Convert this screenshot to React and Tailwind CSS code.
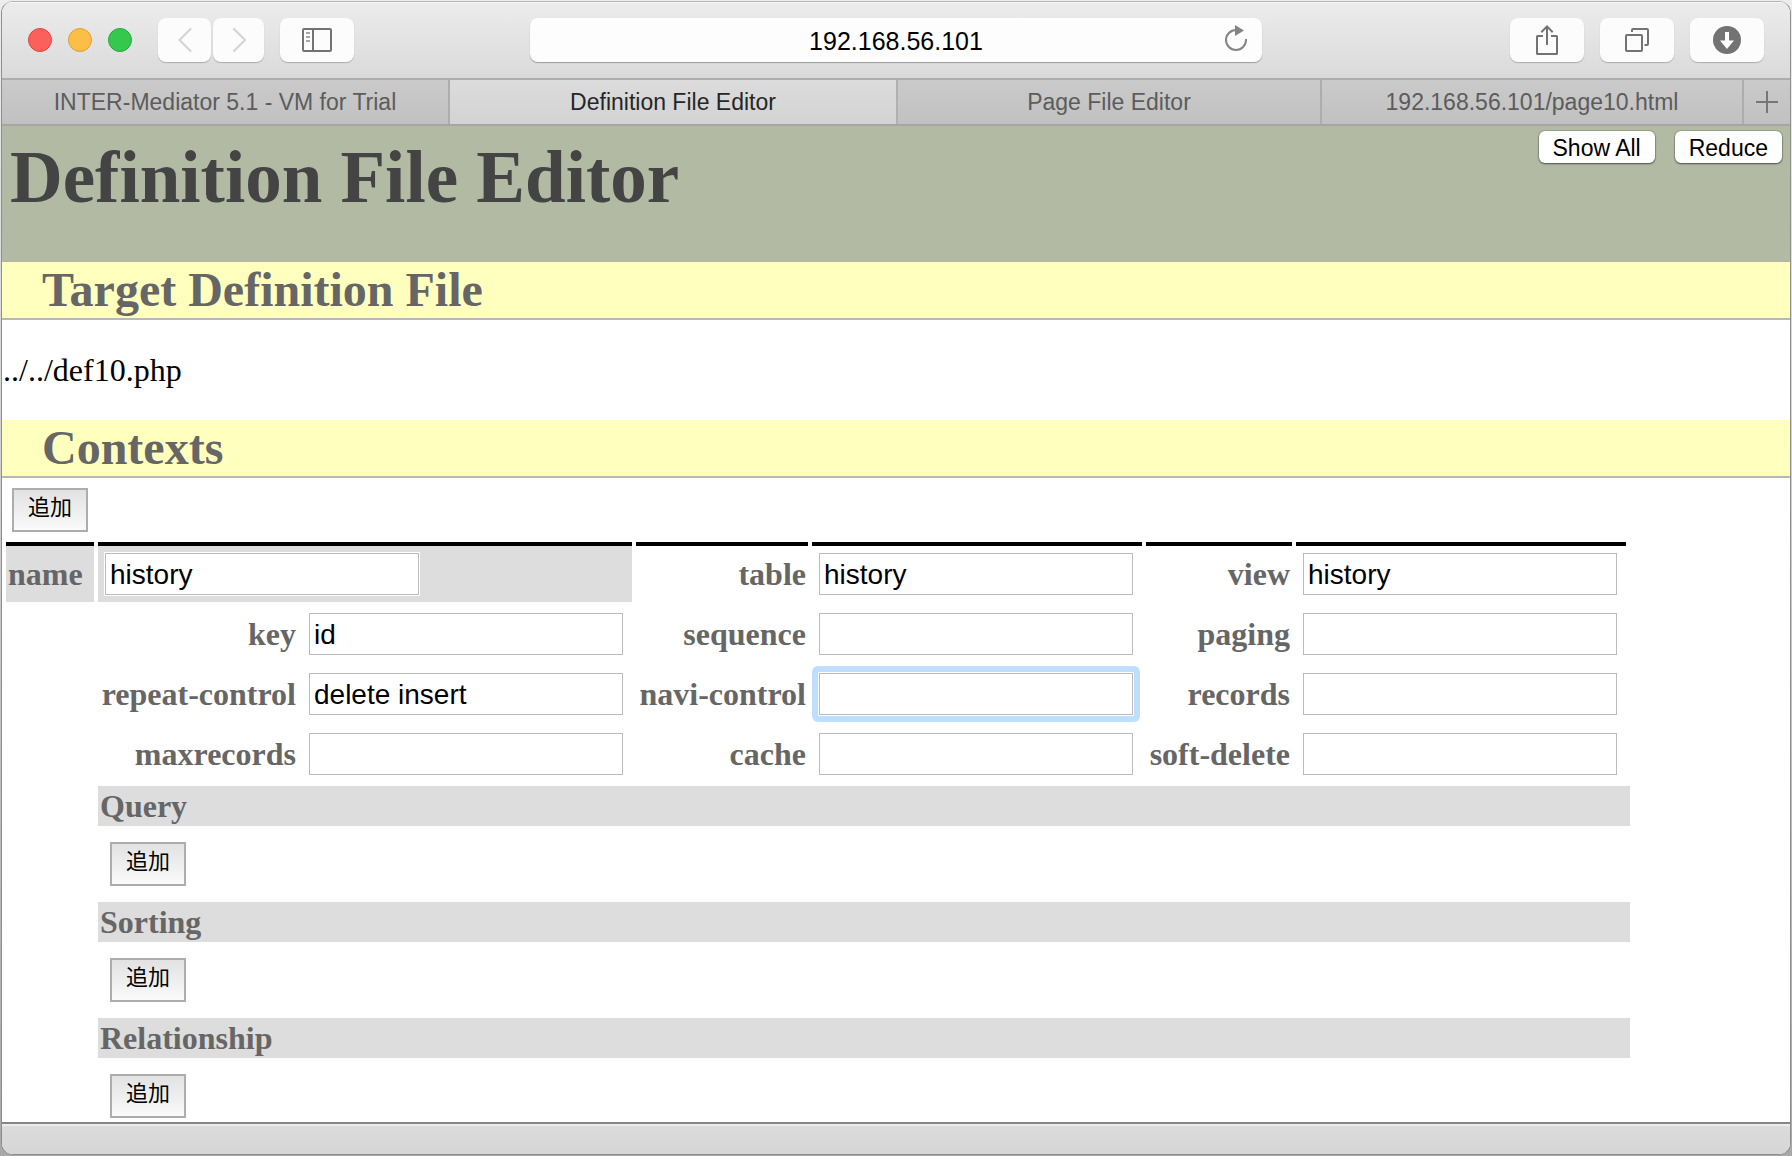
import React from "react";

const serif = "font-['Liberation_Serif','Noto_Sans_CJK_JP',serif]";
const sans = "font-['Liberation_Sans','Noto_Sans_CJK_JP',sans-serif]";

function ToolButton({ label, className = "w-[74px]", children }) {
  return (
    <button
      type="button"
      aria-label={label}
      className={`flex h-11 items-center justify-center rounded-lg bg-[#fcfcfc] shadow-[0_1px_1px_rgba(0,0,0,0.22)] ${className}`}
    >
      {children}
    </button>
  );
}

function Toolbar() {
  return (
    <header className="grid h-[78px] grid-cols-[528fr_732fr_528fr] items-center border-b-2 border-[#adadad] bg-linear-to-b from-[#ececec] to-[#dadada] shadow-[inset_0_1px_0_#f7f7f7]">
      <div className="flex items-center pl-[26px]">
        <div className="flex gap-4">
          <button type="button" aria-label="Close" className="size-6 rounded-full border border-[#e0443f] bg-[#fc605c]" />
          <button type="button" aria-label="Minimize" className="size-6 rounded-full border border-[#dea035] bg-[#fdbe46]" />
          <button type="button" aria-label="Zoom" className="size-6 rounded-full border border-[#24a93a] bg-[#34c84f]" />
        </div>
        <div className="ml-[26px] flex gap-0.5">
          <ToolButton label="Back" className="w-[53px]">
            <svg width="16" height="26" viewBox="1 0 16 26" fill="none" stroke="#d6d6d6" strokeWidth="2.4" strokeLinecap="round" strokeLinejoin="round">
              <path d="M14.500 2 3.500 13l11 11" />
            </svg>
          </ToolButton>
          <ToolButton label="Forward" className="w-[51px]">
            <svg width="16" height="26" viewBox="0 0 16 26" fill="none" stroke="#d6d6d6" strokeWidth="2.4" strokeLinecap="round" strokeLinejoin="round">
              <path d="M3 2l11 11L3 24" />
            </svg>
          </ToolButton>
        </div>
        <div className="ml-4">
          <ToolButton label="Sidebar">
            <svg width="30" height="24" viewBox="0 0 30 24" fill="none" stroke="#737373" strokeWidth="2">
              <rect x="1" y="1" width="28" height="22" rx="1" />
              <path d="M11 1v22" />
              <path d="M4 5h4M4 9h4M4 13h4" stroke="#a6a6a6" />
            </svg>
          </ToolButton>
        </div>
      </div>
      <div className="flex h-11 items-center rounded-lg bg-[#fdfdfd] pr-3.5 pl-[38px] shadow-[0_1px_1px_rgba(0,0,0,0.3)]">
        <input
          aria-label="Address"
          defaultValue="192.168.56.101"
          className="min-w-0 flex-1 bg-transparent pt-0.5 text-center text-[25px] leading-8 text-black outline-none"
        />
        <button type="button" aria-label="Reload">
          <svg width="24" height="30" viewBox="0 -1 24 30" fill="none">
            <path d="M12 4A10 10 0 1 0 22 14V13" stroke="#838383" strokeWidth="2" />
            <path d="M11 -1l9 5.500-9 5.500z" fill="#838383" />
          </svg>
        </button>
      </div>
      <div className="flex justify-end gap-4 pr-[26px]">
        <ToolButton label="Share">
          <svg width="24" height="32" viewBox="0 0 24 32" fill="none" stroke="#737373" strokeWidth="2">
            <path d="M8 12H2.500a.5.5 0 0 0-.5.5v17a.5.5 0 0 0 .5.5h19a.5.5 0 0 0 .5-.5v-17a.5.5 0 0 0-.5-.5H16" />
            <path d="M12 21V2M6.300 8.200 12 2.400l5.700 5.800" />
          </svg>
        </ToolButton>
        <ToolButton label="Show all tabs">
          <svg width="26" height="26" viewBox="0 0 26 26" fill="none" stroke="#737373" strokeWidth="2">
            <rect x="2" y="8" width="16" height="16" rx="1" />
            <path d="M8 5V3a1 1 0 0 1 1-1h14a1 1 0 0 1 1 1v14a1 1 0 0 1-1 1h-2.500" />
          </svg>
        </ToolButton>
        <ToolButton label="Downloads">
          <svg width="28" height="28" viewBox="0 0 28 28">
            <circle cx="14" cy="14" r="14" fill="#737373" />
            <path d="M12 6h4v8.500h5L14 23l-7-8.500h5z" fill="#fff" />
          </svg>
        </ToolButton>
      </div>
    </header>
  );
}

const tabs = [
  { title: "INTER-Mediator 5.1 - VM for Trial" },
  { title: "Definition File Editor", active: true },
  { title: "Page File Editor" },
  { title: "192.168.56.101/page10.html" },
];

function TabBar() {
  return (
    <nav className="grid h-[46px] grid-cols-[448fr_448fr_424fr_422fr_46px] border-b-2 border-[#a5a7a6] text-[23px]">
      {tabs.map((t) => (
        <button
          key={t.title}
          type="button"
          className={
            t.active
              ? "border-r-2 border-[#b0b0b0] bg-linear-to-b from-[#dcdcdc] to-[#d3d3d3] leading-8 whitespace-nowrap text-[#262626]"
              : "border-r-2 border-[#adadad] bg-linear-to-b from-[#cacaca] to-[#c1c1c1] leading-8 whitespace-nowrap text-[#5c5c5c]"
          }
        >
          {t.title}
        </button>
      ))}
      <button type="button" aria-label="New tab" className="flex items-center justify-center bg-linear-to-b from-[#cacaca] to-[#c1c1c1]">
        <svg width="22" height="22" viewBox="0 0 22 22" stroke="#767676" strokeWidth="2">
          <path d="M11 0v22M0 11h22" />
        </svg>
      </button>
    </nav>
  );
}

function PushButton({ children }) {
  return (
    <button
      type="button"
      className="h-8 rounded-md bg-white px-3.5 pt-px text-[23px] leading-8 text-black shadow-[0_0_0_1px_rgba(0,0,0,0.12),0_1px_2px_rgba(0,0,0,0.5)]"
    >
      {children}
    </button>
  );
}

function AddButton() {
  return (
    <button
      type="button"
      className={`block h-11 w-[76px] border-2 border-[#adadad] bg-linear-to-b from-[#e2e2e2] to-[#fafafa] pb-1 text-[22px] leading-8 text-black ${sans}`}
    >
      追加
    </button>
  );
}

function SectionTitle({ children }) {
  return (
    <h2 className="border-b-2 border-[#b8b8b8] bg-[#ffffbe] pl-10 text-5xl leading-[56px] font-bold text-[#666]">
      {children}
    </h2>
  );
}

function Field({ name, value = "" }) {
  return (
    <input
      id={name}
      defaultValue={value}
      className={`block h-[42px] w-[314px] border border-[#bbb] bg-white px-1 pt-0.5 text-[28px] leading-8 text-black shadow-[0_0_0_1px_#fff] outline-none ${sans}`}
    />
  );
}

function Cells({ name, value, focused, top }) {
  const edge = top ? "border-t-4 border-black" : "";
  return (
    <>
      <th className={`pr-0.5 text-right font-bold whitespace-nowrap ${edge}`}>
        <label htmlFor={name}>{name}</label>
      </th>
      <td className={edge}>
        <div className={focused ? "w-fit rounded-md bg-[#bfdfff] p-[7px]" : "w-fit p-[7px]"}>
          <Field name={name} value={value} />
        </div>
      </td>
    </>
  );
}

const rows = [
  [{ name: "key", value: "id" }, { name: "sequence" }, { name: "paging" }],
  [{ name: "repeat-control", value: "delete insert" }, { name: "navi-control", focused: true }, { name: "records" }],
  [{ name: "maxrecords" }, { name: "cache" }, { name: "soft-delete" }],
];

function Contexts() {
  return (
    <div className="w-fit">
      <table className="border-separate border-spacing-1 text-[32px] leading-9 text-[#666]">
        <colgroup>
          <col className="w-[88px]" />
          <col className="w-[200px]" />
          <col className="w-[330px]" />
          <col className="w-[172px]" />
          <col className="w-[330px]" />
          <col className="w-[146px]" />
          <col className="w-[330px]" />
        </colgroup>
        <tbody>
          <tr>
            <th className="border-t-4 border-black bg-[#ddd] pl-0.5 text-left font-bold">
              <label htmlFor="name">name</label>
            </th>
            <td colSpan={2} className="border-t-4 border-black bg-[#ddd] p-[7px]">
              <Field name="name" value="history" />
            </td>
            <Cells name="table" value="history" top />
            <Cells name="view" value="history" top />
          </tr>
          {rows.map((row) => (
            <tr key={row[0].name}>
              <td />
              {row.map((f) => (
                <Cells key={f.name} {...f} />
              ))}
            </tr>
          ))}
        </tbody>
      </table>
      <div className="ml-24">
        {["Query", "Sorting", "Relationship"].map((title, i) => (
          <section key={title}>
            <h3 className="bg-[#ddd] pl-0.5 text-[32px] leading-10 font-bold text-[#666]">{title}</h3>
            <div className={i < 2 ? "px-3 py-4" : "px-3 pt-4 pb-1"}>
              <AddButton />
            </div>
          </section>
        ))}
      </div>
    </div>
  );
}

export default function App() {
  return (
    <div className={`flex min-h-screen flex-col bg-linear-to-b from-[#ededed] to-[#a8a8a8] p-px ${sans}`}>
      <div className="flex flex-1 flex-col overflow-hidden rounded-xl border border-[#8e8e8e] border-t-[#b4b4b4] bg-white">
        <Toolbar />
        <TabBar />
        <main className={`flex-1 bg-white ${serif}`}>
          <div className="flex items-start justify-between bg-[#b2baa3] pr-2 pb-11 pl-2">
            <h1 className="pt-3 text-[73px] leading-[80px] font-bold text-[#444]">Definition File Editor</h1>
            <div className={`flex gap-5 pt-[5px] ${sans}`}>
              <PushButton>Show All</PushButton>
              <PushButton>Reduce</PushButton>
            </div>
          </div>
          <SectionTitle>Target Definition File</SectionTitle>
          <p className="px-px py-8 text-[32px] leading-9 text-black">../../def10.php</p>
          <SectionTitle>Contexts</SectionTitle>
          <div className="px-2.5 pt-2.5 pb-1.5">
            <AddButton />
          </div>
          <Contexts />
        </main>
        <footer className="h-8 border-t-2 border-[#868686] bg-linear-to-b from-[#dcdcdc] to-[#d6d6d6] shadow-[inset_0_2px_0_#ececec]" />
      </div>
    </div>
  );
}
